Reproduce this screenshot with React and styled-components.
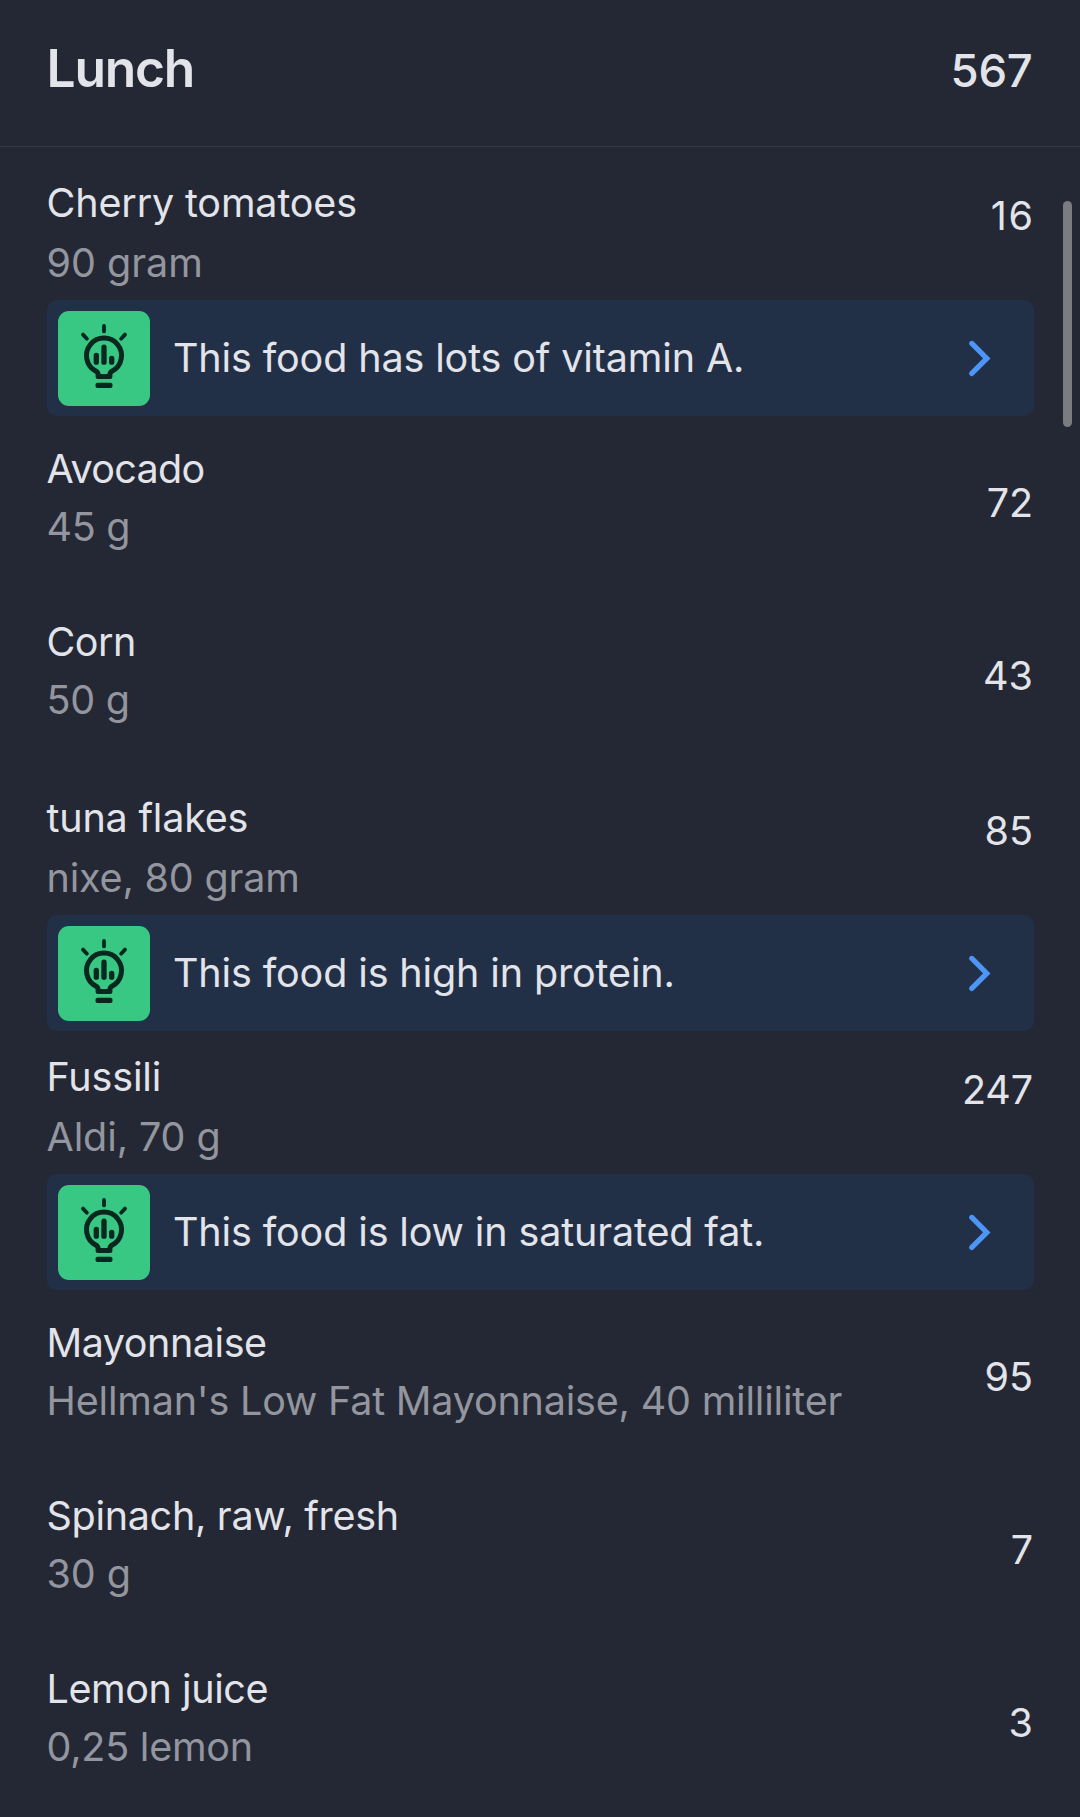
import styled, { createGlobalStyle } from 'styled-components';

const GlobalStyle = createGlobalStyle`
    *, *::before, *::after {
        box-sizing: border-box;
    }

    body {
        margin: 0;
        background-color: #242834;
        color: #e3e4ea;
        font-family: Inter, "Liberation Sans", sans-serif;
    }
`;

const Page = styled.main`
    position: relative;
    height: 1817px;
    overflow: hidden;
`;

const Header = styled.header`
    display: flex;
    justify-content: space-between;
    align-items: baseline;
    height: 147px;
    padding: 38px 47.5px 0 46.5px;
    border-bottom: 1px solid #353944;
`;

const Title = styled.h1`
    margin: 0;
    font-size: 51.5px;
    line-height: 61px;
    font-weight: 600;
    letter-spacing: -1.2px;
`;

const Total = styled.span`
    font-size: 45.5px;
    line-height: 61px;
    font-weight: 460;
    letter-spacing: -0.3px;
`;

const List = styled.ul`
    list-style: none;
    margin: 0;
    padding: 0 46.5px;
`;

const Item = styled.li`
    height: ${({ $tip }) => $tip ? 'auto' : '173px'};
    padding-top: ${({ $tip, $tight }) => $tip ? ($tight ? '16px' : '25.8px') : '24px'};
`;

const Row = styled.div`
    display: flex;
    justify-content: space-between;
    line-height: ${({ $tip }) => $tip ? '60.4px' : '58px'};
    font-size: 39.5px;
`;

const Name = styled.div`
    letter-spacing: ${({ $spacing }) => $spacing || 0}px;
    white-space: nowrap;
`;

const Amount = styled(Name)`
    color: #94969f;
`;

const Calories = styled.div`
    padding: ${({ $tip }) => $tip ? '13px' : '34px'} 0.5px 0 0;
    margin-right: ${({ $spacing }) => -$spacing}px;
    letter-spacing: ${({ $spacing }) => $spacing || 0}px;
`;

const Tip = styled.div`
    display: flex;
    align-items: center;
    height: 116px;
    margin-top: 6.2px;
    padding: 0 42.5px 0 11px;
    border-radius: 10px;
    background-color: #223047;
    font-size: 39.5px;
`;

const Tile = styled.div`
    width: 92.5px;
    height: 95px;
    margin: 1px 23px 0 0;
    border-radius: 11px;
    background-color: #38c883;

    svg {
        display: block;
    }
`;

const TipText = styled.span`
    flex: 1;
    padding-top: 1.4px;
    white-space: nowrap;
    letter-spacing: -0.13px;
`;

const Scrollbar = styled.div`
    position: absolute;
    top: 201px;
    right: 8.5px;
    width: 9px;
    height: 226px;
    border-radius: 5px;
    background-color: #7b7b82;
`;

// spacing: letter-spacing of the name, the amount and the calories
const foods = [
    { name: 'Cherry tomatoes', amount: '90 gram', calories: 16, tip: 'This food has lots of vitamin A.', spacing: [-0.15, 0, 1.8] },
    { name: 'Avocado', amount: '45 g', calories: 72, spacing: [-0.66, -0.3, -0.2] },
    { name: 'Corn', amount: '50 g', calories: 43, spacing: [-0.5, -0.3, 0] },
    { name: 'tuna flakes', amount: 'nixe, 80 gram', calories: 85, tip: 'This food is high in protein.', spacing: [-0.2, -0.18, 0] },
    { name: 'Fussili', amount: 'Aldi, 70 g', calories: 247, tip: 'This food is low in saturated fat.', tight: true, spacing: [-0.15, -0.1, -0.2] },
    { name: 'Mayonnaise', amount: "Hellman's Low Fat Mayonnaise, 40 milliliter", calories: 95, spacing: [-0.46, -0.19, 0] },
    { name: 'Spinach, raw, fresh', amount: '30 g', calories: 7, spacing: [-0.3, -0.1, 0] },
    { name: 'Lemon juice', amount: '0,25 lemon', calories: 3, spacing: [-0.42, -0.23, 0] },
];

const BulbIcon = () => (
    <svg width="92.5" height="95" viewBox="0 0 92.5 95" fill="none" stroke="#07271f" strokeLinecap="round" strokeLinejoin="round">
        <path strokeWidth="3.8" d="M46 15v5.4M25 23.6l3.9 4.1M67 23.6l-3.9 4.1" />
        <path strokeWidth="5" d="M40.1 65.6V63.4C40.1 61.6 39 60.7 37.7 60A17.5 17.5 0 1 1 54.3 60C53 60.7 51.9 61.6 51.9 63.4V65.6Z" />
        <path strokeWidth="5.3" d="M38.3 51.2V44.4M46 51.2V36.2M53.7 51.2V47.4" />
        <rect x="37.5" y="71.7" width="17" height="5.4" rx="2" fill="#07271f" stroke="none" />
    </svg>
);

const Chevron = () => (
    <svg width="24" height="38" viewBox="0 0 24 38" fill="none" stroke="#4e95f8" strokeWidth="5.2" strokeLinecap="round">
        <path d="M4.8 4.4L19.8 19.4L4.8 34.4" />
    </svg>
);

const Food = ({ food }) => {
    const { name, amount, calories, tip, tight, spacing } = food;
    return (
        <Item $tip={tip} $tight={tight}>
            <Row $tip={tip}>
                <div>
                    <Name $spacing={spacing[0]}>{name}</Name>
                    <Amount $spacing={spacing[1]}>{amount}</Amount>
                </div>
                <Calories $tip={tip} $spacing={spacing[2]}>{calories}</Calories>
            </Row>
            {tip && (
                <Tip>
                    <Tile><BulbIcon /></Tile>
                    <TipText>{tip}</TipText>
                    <Chevron />
                </Tip>
            )}
        </Item>
    )
}

const App = () => {
    return (
        <>
            <GlobalStyle />
            <Page>
                <Header>
                    <Title>Lunch</Title>
                    <Total>567</Total>
                </Header>
                <List>
                    {foods.map((food) => <Food key={food.name} food={food} />)}
                </List>
                <Scrollbar />
            </Page>
        </>
    )
}

export default App;
